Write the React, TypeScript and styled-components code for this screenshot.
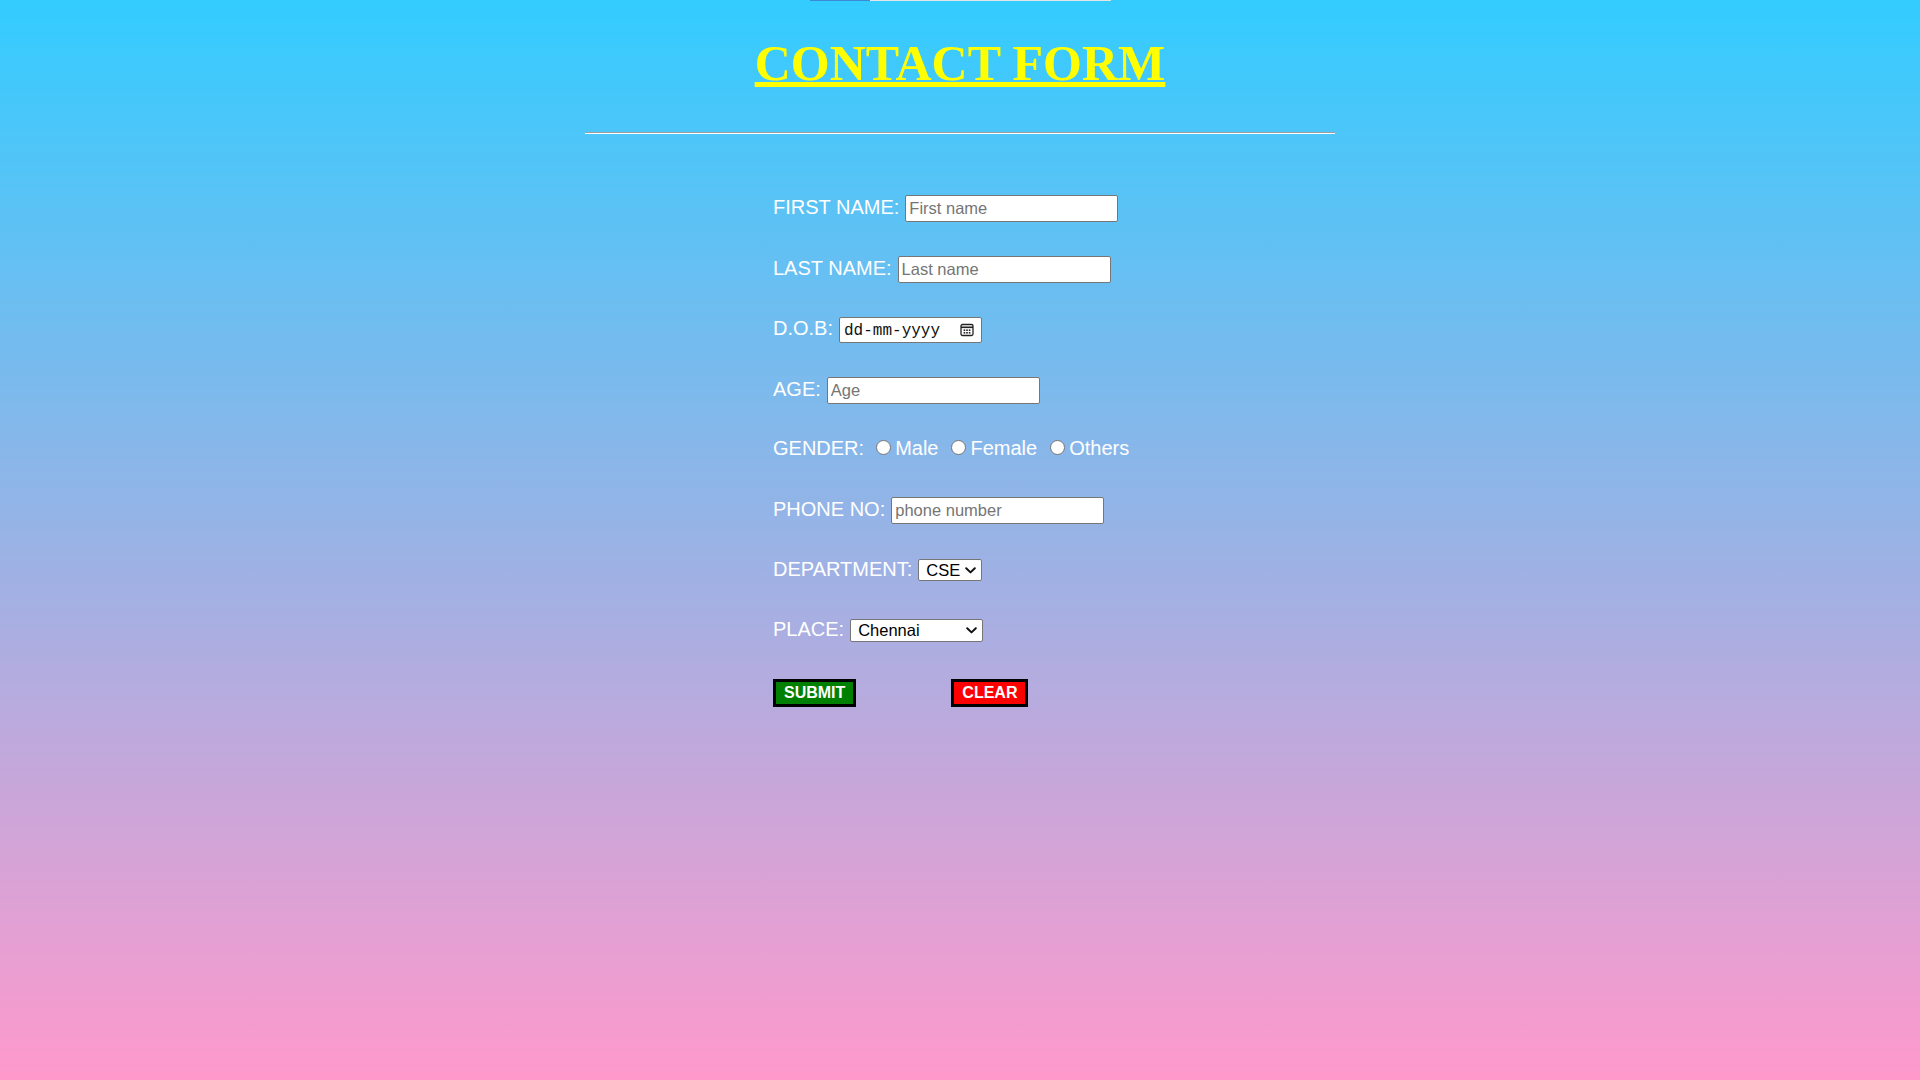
import React from "react";
import styled, { createGlobalStyle } from "styled-components";

const GlobalStyle = createGlobalStyle`
  html, body { margin: 0; padding: 0; }
  body { font-family: "Liberation Sans", Arial, sans-serif; }
  * { box-sizing: border-box; }
`;

const Page = styled.div`
  min-height: 100vh;
  background: linear-gradient(to bottom, #33ccff, #ff99cc);
  display: flex;
  flex-direction: column;
  align-items: center;
`;

const TopStrip = styled.div`
  width: 301px;
  height: 1px;
  display: flex;
`;

const StripPart = styled.div<{ $w?: number; $color: string }>`
  ${(p) => (p.$w ? `width: ${p.$w}px;` : "flex: 1;")}
  background: ${(p) => p.$color};
`;

const Title = styled.h1`
  margin: 32px 0 0;
  font-family: "Liberation Serif", "Times New Roman", serif;
  font-size: 50px;
  line-height: 60px;
  font-weight: bold;
  color: #ffff00;
  text-decoration: underline;
  text-decoration-thickness: 5px;
  text-underline-offset: 2px;
`;

const Divider = styled.hr`
  width: 750px;
  height: 0;
  margin: 39px 0 0;
  border: none;
  border-top: 1px solid #9c9c9c;
  border-bottom: 1px solid #ffffff;
`;

const Form = styled.form`
  width: 750px;
  padding-left: 188px;
  margin-top: 61px;
  display: flex;
  flex-direction: column;
`;

const Row = styled.div<{ $h?: number }>`
  height: ${(p) => (p.$h ? `${p.$h}px` : "auto")};
  display: flex;
  align-items: baseline;
  white-space: nowrap;
`;

const Label = styled.label`
  font-size: 20px;
  color: #ffffff;
  margin-right: 6px;
`;

const TextInput = styled.input`
  width: 213px;
  height: 27px;
  padding: 0 3px;
  border: 1px solid #767676;
  border-radius: 2px;
  background: #ffffff;
  font-family: "Liberation Sans", Arial, sans-serif;
  font-size: 16.5px;
  color: #000;
  &::placeholder { color: #757575; }
`;

const DateBox = styled.div`
  width: 143px;
  height: 26px;
  padding: 4px 7px 0 4px;
  border: 1px solid #767676;
  border-radius: 2px;
  background: #ffffff;
  display: inline-flex;
  align-items: flex-start;
  justify-content: space-between;
  & > svg { align-self: center; margin-top: -4px; }
`;

const DateText = styled.span`
  font-family: "Liberation Mono", "Courier New", monospace;
  font-size: 16px;
  line-height: 18px;
  color: #111;
`;

const RadioGroup = styled.div`
  display: flex;
  align-items: baseline;
  margin-left: 6px;
`;

const Option = styled.label`
  display: flex;
  align-items: baseline;
  font-size: 20px;
  color: #ffffff;
  margin-right: 13px;
`;

const Radio = styled.input`
  appearance: none;
  align-self: center;
  width: 15px;
  height: 15px;
  margin: 0 4px 3px 0;
  border: 1px solid #767676;
  border-radius: 50%;
  background: #ffffff;
`;

const SelectWrap = styled.span`
  position: relative;
  display: inline-flex;
`;

const Select = styled.select<{ $w: number; $h: number }>`
  appearance: none;
  width: ${(p) => p.$w}px;
  height: ${(p) => p.$h}px;
  padding: 0 20px 0 7px;
  font-family: "Liberation Sans", Arial, sans-serif;
  font-size: 16.5px;
  color: #000;
  background: #ffffff;
  border: 1px solid #767676;
  border-radius: 2px;
`;

const Chevron = styled.svg`
  position: absolute;
  right: 6px;
  top: 50%;
  margin-top: -3px;
  pointer-events: none;
`;

const Button = styled.button<{ $bg: string }>`
  padding: 2px 8px;
  border: 3px solid #000000;
  background: ${(p) => p.$bg};
  color: #ffffff;
  font-family: "Liberation Sans", Arial, sans-serif;
  font-size: 16px;
  font-weight: bold;
  line-height: 18px;
  & + & { margin-left: 95px; }
`;

const CalendarIcon = () => (
  <svg width="14" height="14" viewBox="0 0 14 14" fill="none">
    <rect x="1" y="1.5" width="12" height="11" rx="1.5" stroke="#222" strokeWidth="1.3" />
    <line x1="1" y1="4.3" x2="13" y2="4.3" stroke="#222" strokeWidth="1.6" />
    <rect x="3.6" y="6.4" width="1.6" height="1.6" fill="#222" />
    <rect x="6.2" y="6.4" width="1.6" height="1.6" fill="#222" />
    <rect x="8.8" y="6.4" width="1.6" height="1.6" fill="#222" />
    <rect x="3.6" y="9" width="1.6" height="1.6" fill="#222" />
    <rect x="6.2" y="9" width="1.6" height="1.6" fill="#222" />
    <rect x="8.8" y="9" width="1.6" height="1.6" fill="#222" />
  </svg>
);

const DropSelect = ({
  w,
  h,
  options,
}: {
  w: number;
  h: number;
  options: string[];
}) => (
  <SelectWrap>
    <Select $w={w} $h={h} defaultValue={options[0]}>
      {options.map((o) => (
        <option key={o}>{o}</option>
      ))}
    </Select>
    <Chevron width="11" height="7" viewBox="0 0 11 7" fill="none">
      <path d="M1.2 1.2 L5.5 5.4 L9.8 1.2" stroke="#111" strokeWidth="2" strokeLinecap="round" strokeLinejoin="round" />
    </Chevron>
  </SelectWrap>
);

export default function App() {
  return (
    <Page>
      <GlobalStyle />
      <TopStrip>
        <StripPart $w={60} $color="#3a8ad6" />
        <StripPart $color="#e4e4e4" />
      </TopStrip>
      <Title>CONTACT FORM</Title>
      <Divider />
      <Form onSubmit={(e) => e.preventDefault()}>
        <Row $h={61}>
          <Label>FIRST NAME:</Label>
          <TextInput placeholder="First name" />
        </Row>
        <Row $h={61}>
          <Label>LAST NAME:</Label>
          <TextInput placeholder="Last name" />
        </Row>
        <Row $h={60}>
          <Label>D.O.B:</Label>
          <DateBox>
            <DateText>dd-mm-yyyy</DateText>
            <CalendarIcon />
          </DateBox>
        </Row>
        <Row $h={60}>
          <Label>AGE:</Label>
          <TextInput placeholder="Age" />
        </Row>
        <Row $h={60}>
          <Label>GENDER:</Label>
          <RadioGroup>
            <Option>
              <Radio type="radio" name="gender" />
              <span>Male</span>
            </Option>
            <Option>
              <Radio type="radio" name="gender" />
              <span>Female</span>
            </Option>
            <Option>
              <Radio type="radio" name="gender" />
              <span>Others</span>
            </Option>
          </RadioGroup>
        </Row>
        <Row $h={61}>
          <Label>PHONE NO:</Label>
          <TextInput placeholder="phone number" />
        </Row>
        <Row $h={60}>
          <Label>DEPARTMENT:</Label>
          <DropSelect w={64} h={22} options={["CSE", "ECE", "EEE", "MECH"]} />
        </Row>
        <Row $h={61}>
          <Label>PLACE:</Label>
          <DropSelect w={133} h={23} options={["Chennai", "Coimbatore", "Madurai"]} />
        </Row>
        <Row>
          <Button type="submit" $bg="#008000">SUBMIT</Button>
          <Button type="reset" $bg="#ff0000">CLEAR</Button>
        </Row>
      </Form>
    </Page>
  );
}
